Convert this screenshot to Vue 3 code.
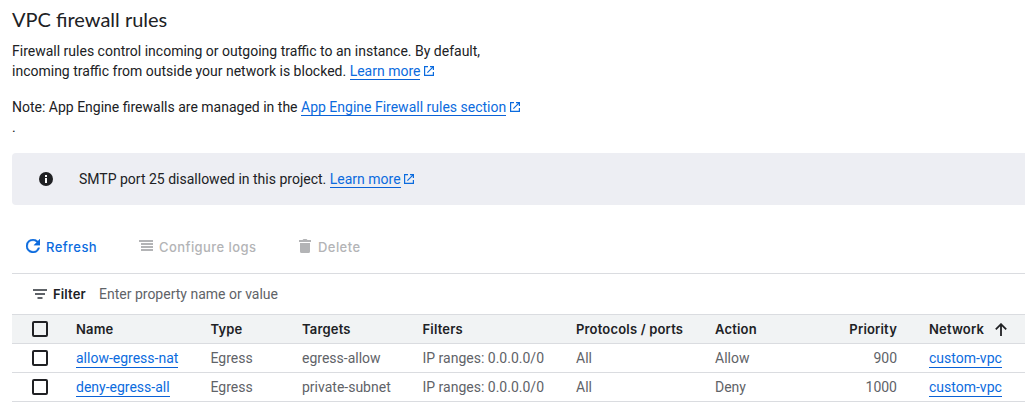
<script setup>
const columns = [
  { key: 'name', label: 'Name' },
  { key: 'type', label: 'Type' },
  { key: 'targets', label: 'Targets' },
  { key: 'filters', label: 'Filters' },
  { key: 'ports', label: 'Protocols / ports' },
  { key: 'action', label: 'Action' },
  { key: 'priority', label: 'Priority' },
  { key: 'network', label: 'Network' },
]
const rows = [
  { name: 'allow-egress-nat', type: 'Egress', targets: 'egress-allow', filters: 'IP ranges: 0.0.0.0/0', ports: 'All', action: 'Allow', priority: '900', network: 'custom-vpc' },
  { name: 'deny-egress-all', type: 'Egress', targets: 'private-subnet', filters: 'IP ranges: 0.0.0.0/0', ports: 'All', action: 'Deny', priority: '1000', network: 'custom-vpc' },
]
const isLink = (key) => key === 'name' || key === 'network'
const externalPath = 'M1 1H5V2.2H2.2V9.8H9.8V7H11V11H1ZM7 1H11V5H9.8V3.05L4.8 8.05L3.95 7.2L8.95 2.2H7Z'
</script>

<template>
  <main class="page">
    <h1 class="title">VPC firewall rules</h1>
    <p class="intro">
      Firewall rules control incoming or outgoing traffic to an instance. By default,<br>
      incoming traffic from outside your network is blocked.
      <a class="link">Learn more</a><svg class="external" viewBox="0 0 12 12"><path :d="externalPath" /></svg>
    </p>
    <p class="note">
      Note: App Engine firewalls are managed in the
      <a class="link">App Engine Firewall rules section</a><svg class="external" viewBox="0 0 12 12"><path :d="externalPath" /></svg><br>.
    </p>

    <section class="banner">
      <svg class="info" viewBox="0 0 14 14"><circle cx="7" cy="7" r="7" fill="#202124" /><path d="M6 3h2v2H6zM6 6h2v5H6z" fill="#fff" /></svg>
      <span>SMTP port 25 disallowed in this project. <a class="link">Learn more</a><svg class="external" viewBox="0 0 12 12"><path :d="externalPath" /></svg></span>
    </section>

    <nav class="toolbar">
      <button class="tool refresh">
        <svg width="14" height="14" viewBox="4 4 16 16"><path d="M17.65 6.35A7.96 7.96 0 0 0 12 4a8 8 0 1 0 7.73 10h-2.08A6 6 0 1 1 12 6c1.66 0 3.14.69 4.22 1.78L13 11h7V4z" stroke="currentColor" stroke-width=".4" /></svg>
        <span>Refresh</span>
      </button>
      <button class="tool configure">
        <svg width="14" height="13" viewBox="0 0 14 13"><path d="M0 0h14v2H0zM2 3h12v2H2zM2 6h12v2H2zM2 9h12v2H2z" /></svg>
        <span>Configure logs</span>
      </button>
      <button class="tool delete">
        <svg width="12" height="14" viewBox="0 0 12 14"><path d="M0 1h3.5l1-1h3l1 1H12v2H0zM1 4h10v8.5Q11 14 9.5 14h-7Q1 14 1 12.5z" /></svg>
        <span>Delete</span>
      </button>
    </nav>

    <section class="filter">
      <svg width="14" height="10" viewBox="0 0 14 10"><path d="M0 0h14v2H0zM2 4h10v2H2zM4.5 8h5v2h-5z" fill="#5f6368" /></svg>
      <span class="filter-label">Filter</span>
      <span class="placeholder">Enter property name or value</span>
    </section>

    <section class="table">
      <div class="row head">
        <span class="check"></span>
        <span v-for="c in columns" :key="c.key" :class="c.key">
          <span class="label">{{ c.label }}</span>
          <svg v-if="c.key === 'network'" class="sort" width="12" height="13" viewBox="0 0 12 13"><path d="M6 13V1.5M.8 6.4L6 1.2l5.2 5.2" fill="none" stroke="#202124" stroke-width="1.8" /></svg>
        </span>
      </div>
      <div v-for="r in rows" :key="r.name" class="row">
        <span class="check"></span>
        <span v-for="c in columns" :key="c.key" :class="c.key">
          <a v-if="isLink(c.key)" class="link">{{ r[c.key] }}</a>
          <template v-else>{{ r[c.key] }}</template>
        </span>
      </div>
    </section>
  </main>
</template>

<style>
body { background: #fff; }
</style>

<style scoped>
.page {
  box-sizing: border-box;
  width: 1025px;
  height: 415px;
  padding-left: 12px;
  overflow: hidden;
  color: #202124;
  font: 14px/20px Roboto, sans-serif;
}
.title {
  margin: 0;
  padding-top: 7px;
  font: 400 20px/25px Lato, sans-serif;
}
.intro { margin: 9px 0 0; white-space: nowrap; }
.note { margin: 16px 0 0; white-space: nowrap; }
.link {
  display: inline-block;
  line-height: 15px;
  border-bottom: 1px solid #0b62d6;
  color: #0b6bde;
}
.row .link { line-height: 17px; }
.external {
  width: 12px;
  height: 12px;
  margin-left: 3px;
  vertical-align: -1px;
  fill: #0b6bde;
}
.banner {
  display: flex;
  align-items: center;
  height: 52px;
  margin-top: 16px;
  padding-left: 27px;
  border-radius: 4px 0 0 4px;
  background: #edeef3;
}
.banner .external { margin-left: 2px; }
.info { width: 14px; height: 14px; margin-right: 26px; }
.toolbar {
  display: flex;
  align-items: center;
  height: 68px;
  padding: 0 0 0 14px;
}
.tool {
  display: flex;
  align-items: center;
  padding: 16px 0 0;
  border: 0;
  background: none;
  color: #b3b4b6;
  font: 500 13px/20px Inter, sans-serif;
  letter-spacing: .43px;
}
.tool svg { flex: none; margin-top: -2px; fill: currentColor; }
.refresh { width: 113px; gap: 6px; color: #0b6bde; }
.configure { width: 160px; gap: 6px; }
.delete { gap: 7px; }
.filter {
  display: flex;
  align-items: center;
  height: 40px;
  padding-left: 21px;
  border-top: 1px solid #dadce0;
}
.filter-label { width: 33px; margin: 0 13px 0 6px; font: 600 13px/20px Inter, sans-serif; letter-spacing: .15px; }
.placeholder { color: #5f6368; }
.table { border-top: 1px solid #dadce0; }
.row {
  display: grid;
  grid-template-columns: 64px 134.5px 91.5px 120.5px 153.5px 139px 135px 79px 96px;
  align-items: center;
  height: 28px;
  border-bottom: 1px solid #dadce0;
  color: #5f6368;
  white-space: nowrap;
}
.head {
  background: #f1f3f4;
  color: #202124;
  font: 600 13px/20px Inter, sans-serif;
  letter-spacing: .18px;
}
.check {
  box-sizing: border-box;
  width: 16px;
  height: 16px;
  margin-left: 20px;
  border: 2px solid #202124;
  border-radius: 2px;
}
.priority { justify-self: end; padding-right: 32px; }
.head .network { display: flex; align-items: center; }
.head .network .label { width: 66px; }
</style>
